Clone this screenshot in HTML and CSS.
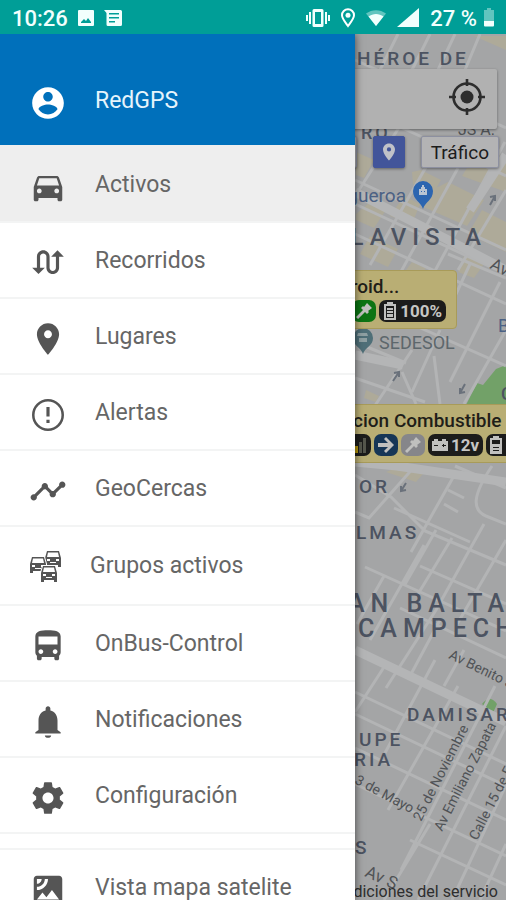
FILE: index.html
```html
<!DOCTYPE html>
<html lang="es">
<head>
  <meta charset="UTF-8" />
  <meta name="viewport" content="width=device-width, initial-scale=1.0" />
  <title>RedGPS</title>
  <link rel="stylesheet" href="styles.css">
</head>
<body>
  <header class="status-bar">
    <span class="clock">10:26</span>
    <svg class="status-icon" viewBox="0 0 18 18"><path fill-rule="evenodd" d="M2 1h14a1 1 0 0 1 1 1v14a1 1 0 0 1-1 1H2a1 1 0 0 1-1-1V2a1 1 0 0 1 1-1zM4 14h10v-1l-3-4-2 3-2-2-3 3z"/></svg>
    <svg class="status-icon message" viewBox="0 0 18 18"><path fill-rule="evenodd" d="M0 1h16.500a1.500 1.500 0 0 1 1.500 1.500v13a1.500 1.500 0 0 1-1.500 1.500H4a1.500 1.500 0 0 1-1.500-1.500V4zM5 4v1.500h10V4zM5 8v1.500h10V8zM5 12v1.500h6V12z"/></svg>
    <div class="status-right">
      <svg width="24" height="20" viewBox="0 0 24 20"><path fill-rule="evenodd" d="M8 1h8a1.500 1.500 0 0 1 1.500 1.500v15A1.500 1.500 0 0 1 16 19H8a1.500 1.500 0 0 1-1.500-1.500v-15A1.500 1.500 0 0 1 8 1zM9 4v12h6V4zM3 4h2v12H3zM0 7h2v6H0zM19 4h2v12h-2zM22 7h2v6h-2z"/></svg>
      <svg width="14" height="20" viewBox="0 0 14 20"><path fill="none" stroke="#fff" stroke-width="2" d="M7 18C4 14 1 10.500 1 7.300a6 6 0 0 1 12 0C13 10.500 10 14 7 18z"/><circle cx="7" cy="7.300" r="2.500"/></svg>
      <svg width="20" height="18" viewBox="0 0 20 18"><path opacity=".4" d="M0 4.500C6 0 14 0 20 4.500L10 17z"/><path d="M2.500 7.500C7 4 13 4 17.500 7.500L10 17z"/></svg>
      <svg width="22" height="20" viewBox="0 0 22 20"><path d="M22 0v19H0z"/></svg>
      <span>27 %</span>
      <svg width="10" height="20" viewBox="0 0 10 20"><path opacity=".4" d="M3 0h4v2h3v11H0V2h3z"/><path d="M0 13h10v4.500a1 1 0 0 1-1 1H1a1 1 0 0 1-1-1z"/></svg>
    </div>
  </header>

  <div class="screen">
    <main class="map">
      <svg class="map-canvas" viewBox="0 34 506 866" preserveAspectRatio="xMinYMin slice">
        <rect class="land" y="34" width="506" height="866"/>
        <!-- blocks of shops and parks -->
        <g class="shops">
          <path d="M356 152l18 8-10 18-8-3zM412 172l9-2 20 10-8 14-20-10zM432 190l16-8 36 18-17 26-46-20zM390 216l14-20 16 8-8 20zM462 176l16-26 28 12v30zM356 214l14-12 16 8-12 18-18-8zM468 234l14-24 24 12v30zM464 256l20 8-10 14-16-6zM360 254l10-18 28 13-10 18zM412 262l14 6-6 8-14-6zM474 36h32v14zM366 390l13 6-3 6-12-4zM386 472l20-8 22 4-12 14z"/>
        </g>
        <path class="park" d="M506 365l-10 4-13 16-6-2-13 26h42z"/>
        <path class="park" d="M482 704q8-10 15 0l-4 9z"/>
        <g class="roads">
          <path d="M355 60l151 68M355 106l151 70M355 180l151 70M355 204l151 70M355 234l151 70M380 310l126 56M448 254l58 24M355 342l51 21M355 378l70 24"/>
          <path d="M398 34l-30 60M430 34l-20 40M455 34l-18 38M480 34l-15 36M400 126l-45 70M430 160l-60 105M458 168l-66 120M505 142l-75 138M506 190l-48 80M470 264l-28 60M500 282l-50 100M506 330l-42 74M412 350l-40 60M440 330l-28 62M434 356l6 48M402 372l14 32"/>
          <path d="M355 475l36 22 34 34 81 34M455 466l51 22M455 474l-44 78M448 490l16 8M444 504l14 8M492 466c-20 30-20 44-6 50l20 8M394 508l76 34M355 512l14 6 46-52"/>
          <path d="M365 567l141 64M420 566l86 38M436 530l-32 56M452 538l-34 56M424 545l-54 95M484 524l-48 86-50 78M506 540l-50 86M400 608l106 50M384 576l-27 48M355 692l151 72M355 714l151 72M355 748l151 72M355 784l151 72M386 664l-31 48M440 620l-30 56M435 660l-50 93M464 650l-20 36M458 686l-70 124M495 686l-94 184M506 726l-88 174M506 785l-54 115M410 840l96 45M506 844l-26 56M430 824l-46 76"/>
        </g>
        <g class="avenues">
          <path d="M355 192l70 36 81 42M355 355l48 10M355 462l42 4 109 16M355 650l151 72M470 210l36-55"/>
        </g>
        <g class="arrows">
          <path d="M393 381l6-9m-5 1l5-1v5M465 384l-5 9m0-5v5l5-1M406 483l-5 8m0-5v5l5-1M490 205l5-9m-5 1l5-1v5"/>
        </g>
        <g class="places">
          <text class="area" x="357" y="65" font-size="19" letter-spacing="3">HÉROE DE</text>
          <text class="area" x="361" y="139" font-size="18" letter-spacing="3">RO</text>
          <text class="street" x="458" y="135" font-size="16">JS A.</text>
          <text class="place blue-text" x="406" y="202" font-size="19" text-anchor="end">Figueroa</text>
          <text class="area" x="487" y="245" font-size="24" letter-spacing="6" text-anchor="end">LAVISTA</text>
          <text class="street" font-size="17" transform="translate(489 268) rotate(26)">Av</text>
          <text class="place" x="379" y="349" font-size="18">SEDESOL</text>
          <text class="place blue-text" x="498" y="332" font-size="18">B</text>
          <text class="area" x="501" y="400" font-size="18">C</text>
          <text class="area" x="359" y="493" font-size="19" letter-spacing="3">OR</text>
          <text class="area" x="356" y="539" font-size="19" letter-spacing="3">LMAS</text>
          <text class="area" x="510" y="612" font-size="25" letter-spacing="6" text-anchor="end">SAN BALTA</text>
          <text class="area" x="358" y="637" font-size="25" letter-spacing="6">CAMPECH</text>
          <text class="street" font-size="14" transform="translate(448 658) rotate(26)">Av Benito J</text>
          <text class="area" x="407" y="721" font-size="19" letter-spacing="3">DAMISAR</text>
          <text class="area" x="359" y="746" font-size="19" letter-spacing="3">UPE</text>
          <text class="area" x="354" y="766" font-size="19" letter-spacing="3">RIA</text>
          <text class="street" font-size="14" transform="translate(354 783) rotate(28)">3 de Mayo</text>
          <text class="street" font-size="14" transform="translate(421 822) rotate(-63)">25 de Noviembre</text>
          <text class="street" font-size="14" transform="translate(442 832) rotate(-63)">Av Emiliano Zapata</text>
          <text class="street" font-size="14" transform="translate(477 841) rotate(-63)">Calle 15 de E</text>
          <text class="area" x="355" y="854" font-size="19">S</text>
          <text class="street" font-size="17" transform="translate(364 876) rotate(24)">Av S</text>
          <text class="terms" x="498" y="897" font-size="16" text-anchor="end">Condiciones del servicio</text>
        </g>
        <g class="pins">
          <path class="pin-blue" d="M423 209c-2-7-10-9-10-18a10 10 0 0 1 20 0c0 9-8 11-10 18z"/>
          <path d="M419 195v-6h2v-2h1v-2h2v2h1v2h2v6zM421 191v1h1v-1zM424 191v1h1v-1z" fill="#b9c4d2" fill-rule="evenodd"/>
          <path class="pin-teal" d="M363 354c-2-7-10-8-10-16a10 10 0 0 1 20 0c0 8-8 9-10 16z"/>
          <path d="M358 333h9l1 3h-11zM359 338h8v4h-8z" fill="#8fa0a3"/>
        </g>
      </svg>

      <div class="map-controls">
        <div class="search-card">
          <button class="locate" aria-label="Mi ubicación">
            <svg width="36" height="36" viewBox="0 0 36 36"><circle cx="18" cy="18" r="13.500" fill="none" stroke="#2d2d2d" stroke-width="2.600"/><circle cx="18" cy="18" r="6.500" fill="#2d2d2d"/><path d="M18 0v7M18 29v7M0 18h7M29 18h7" stroke="#2d2d2d" stroke-width="2.600"/></svg>
          </button>
        </div>
        <div class="map-buttons">
          <button class="map-button">Mapa</button>
          <button class="map-button pin-button" aria-label="Lugares">
            <svg width="12" height="18" viewBox="5 2 14 20"><path d="M12 2C8.130 2 5 5.130 5 9c0 5.250 7 13 7 13s7-7.750 7-13c0-3.870-3.130-7-7-7zm0 9.500a2.500 2.500 0 0 1 0-5 2.500 2.500 0 0 1 0 5z"/></svg>
          </button>
          <button class="map-button">Tráfico</button>
        </div>
      </div>

      <div class="unit unit-android">
        <div class="unit-name">Android...</div>
        <div class="badges">
          <span class="badge green"><svg width="18" height="18" viewBox="0 0 18 18"><path d="M1 15l7-7-2-2 2-2 1 1 3-4 5 5-4 3 1 1-2 2-2-2-7 7z"/></svg></span>
          <span class="badge"><svg width="14" height="18" viewBox="0 0 12 18"><path fill-rule="evenodd" d="M3 0h6v2h3v16H0V2h3zM2 4v12h8V4zM3 6h6v2H3zM3 9h6v2H3zM3 12h6v3H3z"/></svg>100%</span>
        </div>
      </div>

      <div class="unit unit-fuel">
        <div class="unit-name">Estacion Combustible</div>
        <div class="badges">
          <span class="badge signal"><svg width="16" height="18" viewBox="0 0 16 18"><path fill="#b5950c" d="M0 13h3v4H0zM4 10h3v7H4z"/><path fill="#55564c" d="M8 6h3v11H8zM12 2h3v15h-3z"/></svg></span>
          <span class="badge navy"><svg width="18" height="18" viewBox="0 0 18 18"><path d="M9 1l8 8-8 8-2-2 4-4H1V7h10L7 3z"/></svg></span>
          <span class="badge gray"><svg width="18" height="18" viewBox="0 0 18 18"><path d="M1 15l7-7-2-2 2-2 1 1 3-4 5 5-4 3 1 1-2 2-2-2-7 7z"/></svg></span>
          <span class="badge"><svg width="16" height="14" viewBox="0 0 16 14"><path fill-rule="evenodd" d="M2 1h4v2h4V1h4v2h2v10H0V3h2zM2 7v1h4V7zM10 7v1h1v1h1V8h2V7h-2V6h-1v1z"/></svg>12v</span>
          <span class="badge fuel-level"><svg width="12" height="18" viewBox="0 0 12 18"><path fill-rule="evenodd" d="M3 0h6v2h3v16H0V2h3zM2 4v4h8V4zM3 11h6v1H3zM3 14h6v1H3z"/></svg></span>
        </div>
      </div>
    </main>

    <nav class="drawer">
      <div class="drawer-header">
        <svg class="icon" viewBox="0 0 24 24"><path d="M12 2C6.480 2 2 6.480 2 12s4.480 10 10 10 10-4.480 10-10S17.520 2 12 2zm0 3c1.660 0 3 1.340 3 3s-1.340 3-3 3-3-1.340-3-3 1.340-3 3-3zm0 14.200c-2.500 0-4.710-1.280-6-3.220.03-1.990 4-3.080 6-3.080 1.990 0 5.970 1.090 6 3.080-1.290 1.940-3.500 3.220-6 3.220z"/></svg>
        <span>RedGPS</span>
      </div>

      <a href="#activos" class="item" aria-current="page">
        <svg class="icon" viewBox="0 0 24 24"><path d="M18.920 6.010C18.720 5.420 18.160 5 17.500 5h-11c-.66 0-1.210.42-1.420 1.010L3 12v8c0 .55.45 1 1 1h1c.55 0 1-.45 1-1v-1h12v1c0 .55.45 1 1 1h1c.55 0 1-.45 1-1v-8l-2.080-5.990zM6.500 16c-.83 0-1.500-.67-1.500-1.500S5.670 13 6.500 13s1.500.67 1.500 1.500S7.330 16 6.500 16zm11 0c-.83 0-1.500-.67-1.500-1.500s.67-1.500 1.500-1.500 1.500.67 1.500 1.500-.67 1.500-1.500 1.500zM5 11l1.500-4.500h11L19 11H5z"/></svg>
        <span>Activos</span>
      </a>
      <a href="#recorridos" class="item">
        <svg class="icon" viewBox="0 0 24 24"><path d="M18 4l-4 4h3v7c0 1.100-.9 2-2 2s-2-.9-2-2V8c0-2.210-1.790-4-4-4S5 5.790 5 8v7H2l4 4 4-4H7V8c0-1.100.9-2 2-2s2 .9 2 2v7c0 2.210 1.790 4 4 4s4-1.790 4-4V8h3l-4-4z"/></svg>
        <span>Recorridos</span>
      </a>
      <a href="#lugares" class="item">
        <svg class="icon" viewBox="0 0 24 24"><path d="M12 2C8.130 2 5 5.130 5 9c0 5.250 7 13 7 13s7-7.750 7-13c0-3.870-3.130-7-7-7zm0 9.500c-1.380 0-2.500-1.120-2.500-2.500s1.120-2.500 2.500-2.500 2.500 1.120 2.500 2.500-1.120 2.500-2.500 2.500z"/></svg>
        <span>Lugares</span>
      </a>
      <a href="#alertas" class="item">
        <svg class="icon" viewBox="0 0 24 24"><circle cx="12" cy="12" r="9.300" fill="none" stroke="#555" stroke-width="1.600"/><path d="M11 7h2v6h-2zM11 15h2v2h-2z"/></svg>
        <span>Alertas</span>
      </a>
      <a href="#geocercas" class="item">
        <svg class="icon" viewBox="0 0 24 24"><path d="M23 8c0 1.100-.9 2-2 2-.18 0-.35-.02-.51-.07l-3.560 3.550c.05.16.07.34.07.52 0 1.100-.9 2-2 2s-2-.9-2-2c0-.18.02-.36.07-.52l-2.550-2.550c-.16.05-.34.07-.52.07s-.36-.02-.52-.07l-4.550 4.560c.05.16.07.33.07.51 0 1.100-.9 2-2 2s-2-.9-2-2 .9-2 2-2c.18 0 .35.02.51.07l4.560-4.550C8.020 9.360 8 9.180 8 9c0-1.100.9-2 2-2s2 .9 2 2c0 .18-.02.36-.07.52l2.550 2.550c.16-.05.34-.07.52-.07s.36.02.52.07l3.550-3.560C19.020 8.350 19 8.180 19 8c0-1.100.9-2 2-2s2 .9 2 2z"/></svg>
        <span>GeoCercas</span>
      </a>
      <a href="#grupos" class="item item-groups">
        <svg class="icon" viewBox="0 0 38 38">
          <defs>
            <g id="car">
              <path d="M1 7l2-7h12l2 7v9H1z" fill="#fff" stroke="#fff" stroke-width="2"/>
              <path fill-rule="evenodd" d="M3 0h12l2 7v9h-3v-2H4v2H1V7zM4 1.500L3 6h12l-1-4.500zM3 8v2h3V8zM12 8v2h3V8zM6 11v1h6v-1z"/>
            </g>
          </defs>
          <use href="#car" x="15" y="2"/>
          <use href="#car" x="0" y="8"/>
          <use href="#car" x="11" y="17"/>
        </svg>
        <span>Grupos activos</span>
      </a>
      <a href="#onbus" class="item">
        <svg class="icon" viewBox="0 0 24 24"><path d="M4 16c0 .88.39 1.670 1 2.220V20c0 .55.45 1 1 1h1c.55 0 1-.45 1-1v-1h8v1c0 .55.45 1 1 1h1c.55 0 1-.45 1-1v-1.780c.61-.55 1-1.340 1-2.220V6c0-3.500-3.580-4-8-4s-8 .5-8 4v10zm3.500 1c-.83 0-1.500-.67-1.500-1.500S6.670 14 7.500 14s1.500.67 1.500 1.500S8.330 17 7.500 17zm9 0c-.83 0-1.500-.67-1.500-1.500s.67-1.500 1.500-1.500 1.500.67 1.500 1.500-.67 1.500-1.500 1.500zm1.500-6H6V6h12v5z"/></svg>
        <span>OnBus-Control</span>
      </a>
      <a href="#notificaciones" class="item">
        <svg class="icon" viewBox="0 0 24 24"><path d="M12 22c1.100 0 2-.7 2-1.500h-4c0 .8.9 1.500 2 1.500zm6-5v-6c0-3.070-1.640-5.640-4.500-6.320V3.500c0-.83-.67-1.500-1.500-1.500s-1.500.67-1.500 1.500v1.180C7.630 5.360 6 7.920 6 11v6l-2 1.500v.8h16v-.8z"/></svg>
        <span>Notificaciones</span>
      </a>
      <a href="#configuracion" class="item">
        <svg class="icon" viewBox="0 0 24 24"><path d="M19.430 12.980c.04-.32.07-.64.07-.98s-.03-.66-.07-.98l2.110-1.650c.19-.15.24-.42.12-.64l-2-3.460c-.12-.22-.39-.3-.61-.22l-2.490 1c-.52-.4-1.080-.73-1.690-.98l-.38-2.650C14.460 2.180 14.250 2 14 2h-4c-.25 0-.46.18-.49.42l-.38 2.650c-.61.25-1.170.59-1.690.98l-2.490-1c-.23-.09-.49 0-.61.22l-2 3.460c-.13.22-.07.49.12.64l2.110 1.650c-.04.32-.07.65-.07.98s.03.66.07.98l-2.110 1.650c-.19.15-.24.42-.12.64l2 3.460c.12.22.39.3.61.22l2.490-1c.52.4 1.080.73 1.690.98l.38 2.650c.03.24.24.42.49.42h4c.25 0 .46-.18.49-.42l.38-2.650c.61-.25 1.170-.59 1.690-.98l2.490 1c.23.09.49 0 .61-.22l2-3.460c.12-.22.07-.49-.12-.64l-2.110-1.650zM12 15.500c-1.930 0-3.500-1.570-3.500-3.500s1.570-3.500 3.500-3.500 3.500 1.570 3.500 3.500-1.570 3.500-3.500 3.500z"/></svg>
        <span>Configuración</span>
      </a>
      <div class="divider"></div>
      <a href="#satelite" class="item">
        <svg class="icon" viewBox="0 0 24 24"><path d="M19 3H5c-1.100 0-2 .9-2 2v14c0 1.100.9 2 2 2h14c1.100 0 2-.9 2-2V5c0-1.100-.9-2-2-2zM5 4.990h3C8 6.650 6.660 8 5 8V4.990zM5 12v-2c2.760 0 5-2.250 5-5.010h2C12 8.860 8.870 12 5 12zm0 6l3.500-4.500 2.500 3.010L14.500 12l4.500 6H5z"/></svg>
        <span>Vista mapa satelite</span>
      </a>
    </nav>
  </div>
</body>
</html>
```
FILE: styles.css
```css
* {
  box-sizing: border-box;
  margin: 0;
  padding: 0;
}

body {
  font-family: Roboto, "Liberation Sans", sans-serif;
  height: 100vh;
  display: flex;
  flex-direction: column;
  overflow: hidden;
  background-color: #a4a5a6;
}

button {
  font-family: inherit;
  border: none;
  cursor: pointer;
}

/* status bar */
.status-bar {
  height: 34px;
  flex-shrink: 0;
  display: flex;
  align-items: center;
  padding: 2px 12px 0;
  background-color: #009e97;
  color: #f2fffd;
  font-size: 22px;
  font-weight: 500;
}

.status-bar svg {
  fill: #f2fffd;
}

.status-icon {
  width: 18px;
  height: 18px;
  margin-left: 9px;
}

.status-right {
  margin-left: auto;
  display: flex;
  align-items: center;
  gap: 11px;
}

.status-right span {
  margin-right: -4px;
}

/* map */
.screen {
  flex: 1;
  position: relative;
  overflow: hidden;
}

.map {
  height: 100%;
}

.map-canvas {
  position: absolute;
  top: 0;
  left: 0;
  width: 100%;
  height: 100%;
}

.land {
  fill: #a4a5a6;
}

.shops {
  fill: #aeaa99;
}

.park {
  fill: #72a168;
}

.roads,
.avenues {
  fill: none;
  stroke: #b3b4b5;
  stroke-width: 3;
}

.avenues {
  stroke: #b4b5b6;
  stroke-width: 9;
}

.arrows {
  fill: none;
  stroke: #6a717b;
  stroke-width: 2;
}

.area {
  fill: #4c5361;
  font-weight: 500;
}

.place {
  fill: #5d676c;
}

.blue-text {
  fill: #4b6184;
}

.street {
  fill: #505356;
}

.terms {
  fill: #2e2e2e;
}

.pin-blue {
  fill: #2c65b0;
}

.pin-teal {
  fill: #4f6f78;
}

.map-controls {
  position: relative;
  padding: 35px 7px 0;
}

.search-card {
  height: 60px;
  margin-right: 2px;
  padding-right: 12px;
  display: flex;
  align-items: center;
  justify-content: flex-end;
  background-color: #b1b1b1;
  border-radius: 2px;
  box-shadow: 0 1px 3px rgba(0,0,0,0.4);
}

.locate {
  display: flex;
  margin-bottom: 4px;
  background: none;
}

.map-buttons {
  display: flex;
  justify-content: flex-end;
  gap: 16px;
  margin-top: 7px;
}

.map-button {
  height: 32px;
  padding: 0 9px;
  background-color: #b3b3b4;
  border: 1px solid #8d90a0;
  border-radius: 2px;
  box-shadow: 0 1px 3px rgba(0,0,0,0.4);
  color: #1c1c1c;
  font-size: 19px;
}

.pin-button {
  display: flex;
  align-items: center;
  background-color: #42559a;
  border-color: #42559a;
}

.pin-button svg {
  fill: #c0c2c8;
}

/* vehicle labels on the map */
.unit {
  position: absolute;
  padding: 3px 10px 6px;
  background-color: #b9ae74;
  border: 1px solid #a89b59;
  border-radius: 4px;
}

.unit-android {
  top: 236px;
  left: 306px;
  width: 151px;
}

.unit-fuel {
  top: 370px;
  left: 305px;
  width: 240px;
  white-space: nowrap;
}

.unit-name {
  font-size: 19px;
  line-height: 26px;
  font-weight: 500;
  color: #1f1e19;
}

.badges {
  display: flex;
  justify-content: flex-end;
  gap: 3px;
}

.badge {
  height: 22px;
  padding: 0 4px;
  display: flex;
  align-items: center;
  gap: 3px;
  border-radius: 7px;
  background-color: #1c1c1b;
  color: #c6c6c4;
  font-size: 17px;
  font-weight: 700;
}

.badge svg {
  fill: #c0c0be;
}

.green,
.navy,
.gray {
  padding: 0 3px;
}

.green {
  background-color: #0c7413;
}

.navy {
  background-color: #163656;
}

.gray {
  background-color: #86868a;
}

.fuel-level {
  width: 48px;
}

/* side menu */
.drawer {
  position: absolute;
  top: 0;
  left: 0;
  bottom: 0;
  width: calc(100% - 151px);
  overflow: hidden;
  background-color: #fff;
  box-shadow: 0 0 8px rgba(0,0,0,0.6);
  font-size: 23px;
}

.drawer-header,
.item {
  display: flex;
  align-items: center;
  gap: 28px;
  padding-left: 29px;
}

.drawer-header {
  height: 111px;
  padding-top: 22px;
  background-color: #0070bb;
  color: #e6f4fc;
}

.item {
  height: 76px;
  border-bottom: 2px solid #f3f4f4;
  color: #666;
  text-decoration: none;
}

.item:hover,
.item[aria-current="page"] {
  background-color: #eee;
}

.item[aria-current="page"] {
  height: 78px;
  padding-top: 2px;
}

.item-groups {
  height: 79px;
  gap: 23px;
}

.icon {
  width: 38px;
  height: 38px;
  flex-shrink: 0;
  margin-top: 5px;
  fill: #555;
}

.drawer-header .icon {
  fill: #fff;
}

.divider {
  height: 16px;
  border-bottom: 2px solid #f3f4f4;
}
```
